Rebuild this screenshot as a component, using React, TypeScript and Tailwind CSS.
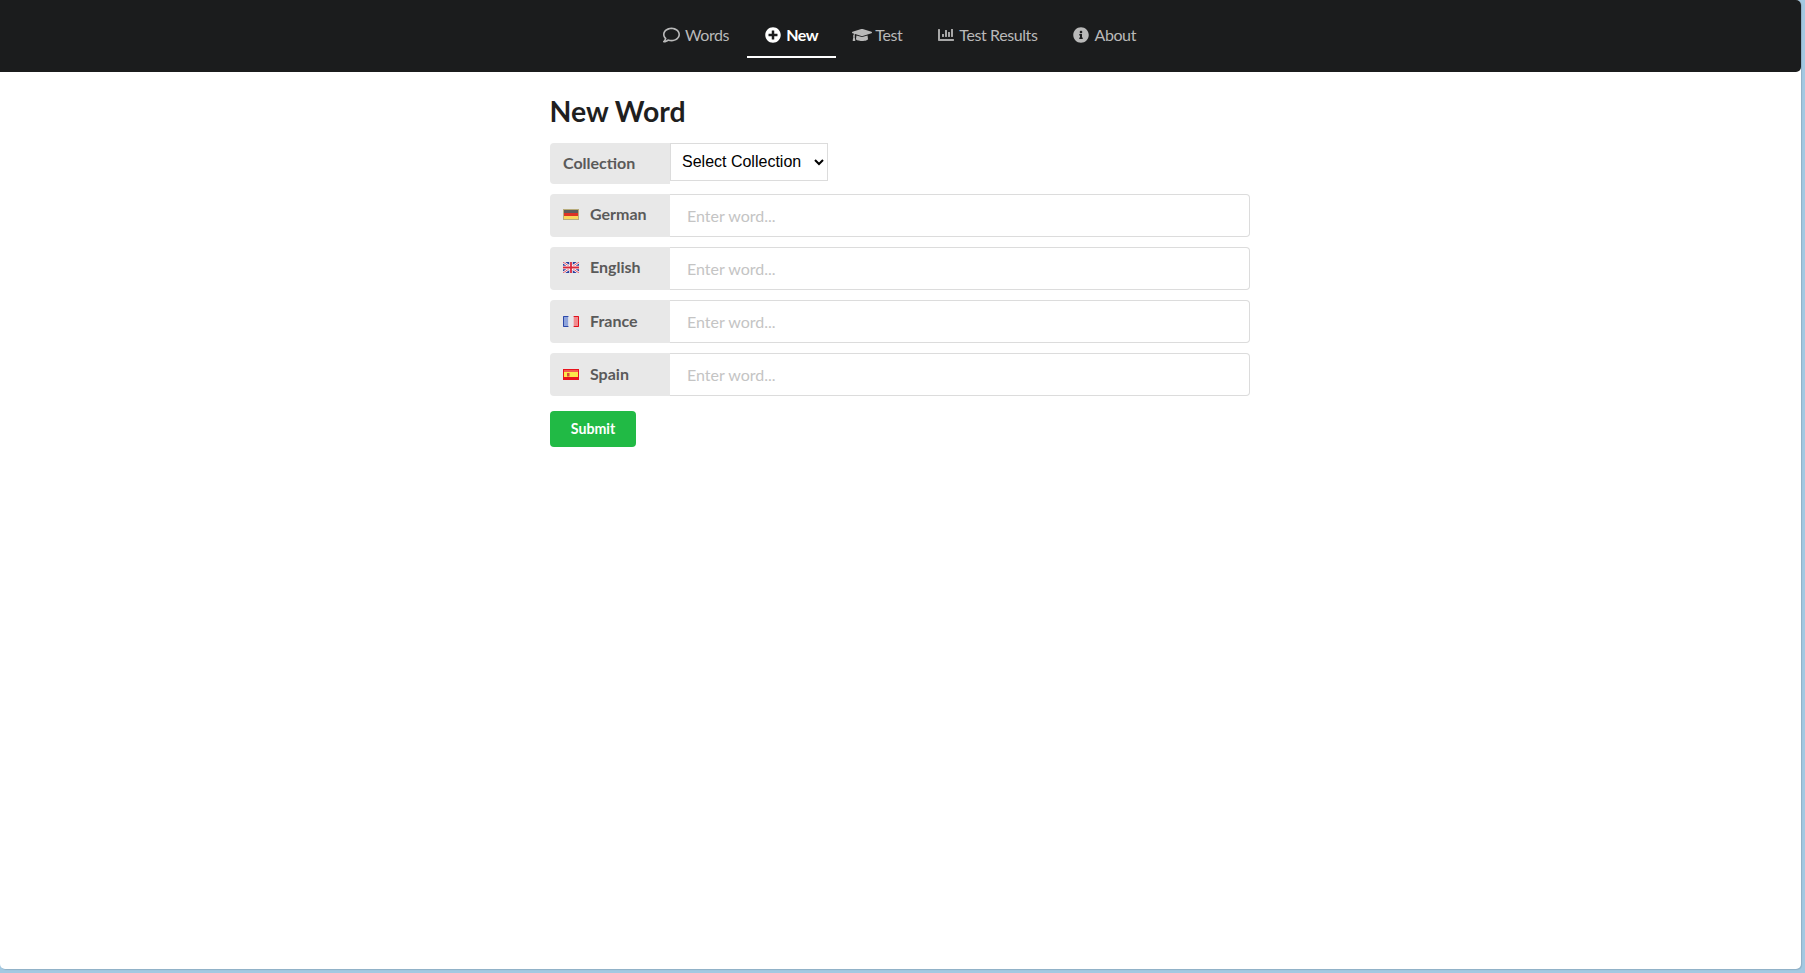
import type { ReactNode } from "react";
import {
  FaRegComment,
  FaPlusCircle,
  FaGraduationCap,
  FaChartBar,
  FaInfoCircle,
} from "react-icons/fa";

function GermanFlag() {
  return (
    <svg width="16" height="11" viewBox="0 0 16 11">
      <rect width="16" height="11" fill="#b8ac7c" />
      <rect x="1" y="1" width="14" height="3" fill="#5c5c5c" />
      <rect x="1" y="4" width="14" height="3" fill="#dd3324" />
      <rect x="1" y="7" width="14" height="3" fill="#f9d65a" />
    </svg>
  );
}

function EnglishFlag() {
  return (
    <svg width="16" height="11" viewBox="0 0 16 11">
      <rect width="16" height="11" fill="#2a3f9d" />
      <path d="M0 0L16 11M16 0L0 11" stroke="#fff" strokeWidth="2.4" />
      <path d="M0 0L16 11M16 0L0 11" stroke="#d8283c" strokeWidth="0.8" />
      <path d="M8 0V11M0 5.5H16" stroke="#fff" strokeWidth="3.4" />
      <path d="M8 0V11M0 5.5H16" stroke="#d8283c" strokeWidth="1.8" />
    </svg>
  );
}

function FranceFlag() {
  return (
    <svg width="16" height="11" viewBox="0 0 16 11">
      <rect width="5.4" height="11" x="0" fill="#8ea4dc" />
      <rect width="5.3" height="11" x="5.4" fill="#e6e6ea" />
      <rect width="5.3" height="11" x="10.7" fill="#f08a8e" />
      <path d="M5.4 .5H.5V10.5H5.4" fill="none" stroke="#2d49a8" />
      <path d="M10.7 .5H15.5V10.5H10.7" fill="none" stroke="#e0101c" />
    </svg>
  );
}

function SpainFlag() {
  return (
    <svg width="16" height="11" viewBox="0 0 16 11">
      <rect width="16" height="11" fill="#e8141c" />
      <rect x="1" y="1" width="14" height="2" fill="#f45a50" />
      <rect x="1" y="3" width="14" height="5" fill="#fbe94a" />
      <rect x="4" y="4" width="2.5" height="3.5" fill="#d84a3a" />
    </svg>
  );
}

function NavItem({
  icon,
  label,
  active,
}: {
  icon: ReactNode;
  label: string;
  active?: boolean;
}) {
  return (
    <a
      className={`flex items-center h-[45px] mt-[13px] px-[17.5px] border-b-2 text-[16px] tracking-[-0.4px] ${
        active
          ? "border-white text-white font-bold"
          : "border-transparent text-[#b9b9b9]"
      }`}
    >
      <span className="flex justify-center w-[17px] mr-[5px] text-[16px]">{icon}</span>
      {label}
    </a>
  );
}

function WordRow({
  flag,
  label,
  lower,
}: {
  flag: ReactNode;
  label: string;
  lower?: boolean;
}) {
  return (
    <div className="flex h-[43px] mb-[10px]">
      <div className="flex items-center w-[120px] pl-[13px] pb-[2px] bg-[#e8e8e8] rounded-l-[4px] text-[16px] font-bold text-[#5a5a5a]">
        <span className={`flex mr-[11px] ${lower ? "mt-[2px]" : ""}`}>{flag}</span>
        <span className={lower ? "" : "pb-[2px]"}>{label}</span>
      </div>
      <input
        placeholder="Enter word..."
        className="flex-1 pl-[17px] pt-[1px] bg-white border border-[#dcdcdc] border-l-0 rounded-r-[4px] text-[16px] outline-none placeholder:text-[#c4c4c4]"
      />
    </div>
  );
}

export default function App() {
  return (
    <div
      className="h-[973px] w-full bg-[#a3c9e2] overflow-hidden"
      style={{ fontFamily: "Lato, sans-serif" }}
    >
      <div className="w-[1801px] h-[969px] bg-white rounded-[5px] shadow-[1px_1px_1px_#8fb0c6]">
        <nav className="flex justify-center h-[72px] pr-[2px] bg-[#1b1c1d] rounded-r-[5px]">
          <NavItem icon={<FaRegComment className="text-[18px]" />} label="Words" />
          <NavItem icon={<FaPlusCircle />} label="New" active />
          <NavItem icon={<FaGraduationCap className="text-[20px] shrink-0" />} label="Test" />
          <NavItem icon={<FaChartBar className="text-[#a8a8a8]" />} label="Test Results" />
          <NavItem icon={<FaInfoCircle />} label="About" />
        </nav>
        <main className="w-[700px] ml-[550px] pt-[21px]">
          <h1 className="-ml-[0.5px] text-[28.4px] leading-[36px] font-bold text-[#1f1f1f] mb-[14px]">
            New Word
          </h1>
          <div className="flex h-[41px] mb-[10px]">
            <div className="flex items-center w-[120px] pl-[13px] pb-[2px] bg-[#e8e8e8] rounded-l-[4px] text-[16px] font-bold text-[#5a5a5a]">
              Collection
            </div>
            <select
              className="w-[158px] h-[38px] bg-white border border-[#dcdcdc] text-[16px] text-black pl-[7px] pb-[2px]"
              style={{ fontFamily: "Liberation Sans, sans-serif" }}
            >
              <option>Select Collection</option>
            </select>
          </div>
          <WordRow flag={<GermanFlag />} label="German" />
          <WordRow flag={<EnglishFlag />} label="English" />
          <WordRow flag={<FranceFlag />} label="France" lower />
          <WordRow flag={<SpainFlag />} label="Spain" lower />
          <button className="w-[86px] h-[36px] mt-[5px] pb-[1px] bg-[#21ba45] rounded-[4px] text-white text-[14.2px] font-bold">
            Submit
          </button>
        </main>
      </div>
    </div>
  );
}
